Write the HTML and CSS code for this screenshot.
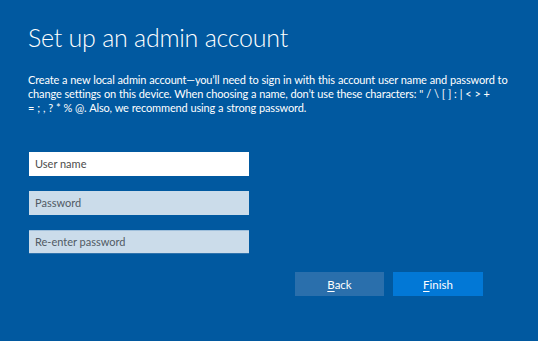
FILE: index.html
```html
<!DOCTYPE html>
<html lang="en">
<head>
<meta charset="utf-8">
<title>Set up an admin account</title>
<link rel="stylesheet" href="styles.css">
</head>
<body>
<main class="page">
  <h1 class="title">Set up an admin account</h1>
  <p class="intro">Create a new local admin account—you’ll need to sign in with this account user name and password to change settings on this device. When choosing a name, don’t use these characters: " / \ [ ] : | &lt; &gt; +<br>= ; , ? * % @. Also, we recommend using a strong password.</p>
  <form class="fields">
    <div class="field field-active">User name</div>
    <div class="field">Password</div>
    <div class="field field-last">Re-enter password</div>
  </form>
  <div class="actions">
    <button class="btn btn-back" type="button"><u>B</u>ack</button>
    <button class="btn btn-finish" type="button"><u>F</u>inish</button>
  </div>
</main>
</body>
</html>
```
FILE: styles.css
```css
html, body {
  margin: 0;
  padding: 0;
  height: 100%;
}
body {
  background: #0159a0;
  color: #ffffff;
  font-family: "Segoe UI", Lato, "Open Sans", sans-serif;
}
.page {
  padding: 21px 0 0 28px;
  width: 480px;
}
.title {
  margin: 0;
  font-size: 25px;
  font-weight: 300;
  line-height: 32px;
  letter-spacing: -0.25px;
}
.intro {
  margin: 20px 0 0 0;
  font-size: 11px;
  line-height: 14px;
  letter-spacing: -0.15px;
  word-spacing: 0.3px;
  width: 482px;
}
.fields {
  margin: 37px 0 0 1px;
  display: flex;
  flex-direction: column;
  gap: 15px;
  width: 220px;
}
.field {
  box-sizing: border-box;
  height: 24px;
  padding: 0 0 0 6px;
  line-height: 24px;
  font-size: 11px;
  color: #505a64;
  background: #cbdcea;
}
.field-active {
  background: #ffffff;
  color: #4c4c4c;
}
.field-last {
  border-top: 1px solid #9fbfdb;
  border-bottom: 1px solid #2f73ad;
  line-height: 22px;
}
.actions {
  margin: 18px 0 0 267px;
  display: flex;
  gap: 9px;
}
.btn {
  height: 24px;
  width: 89px;
  border: none;
  padding: 0;
  color: #ffffff;
  font-family: inherit;
  font-size: 11.5px;
  font-weight: 400;
}
.btn u {
  text-decoration-thickness: 1px;
  text-underline-offset: 2px;
}
.btn-back {
  background: #2a6fac;
}
.btn-finish {
  width: 90px;
  background: #0278d6;
}
```
